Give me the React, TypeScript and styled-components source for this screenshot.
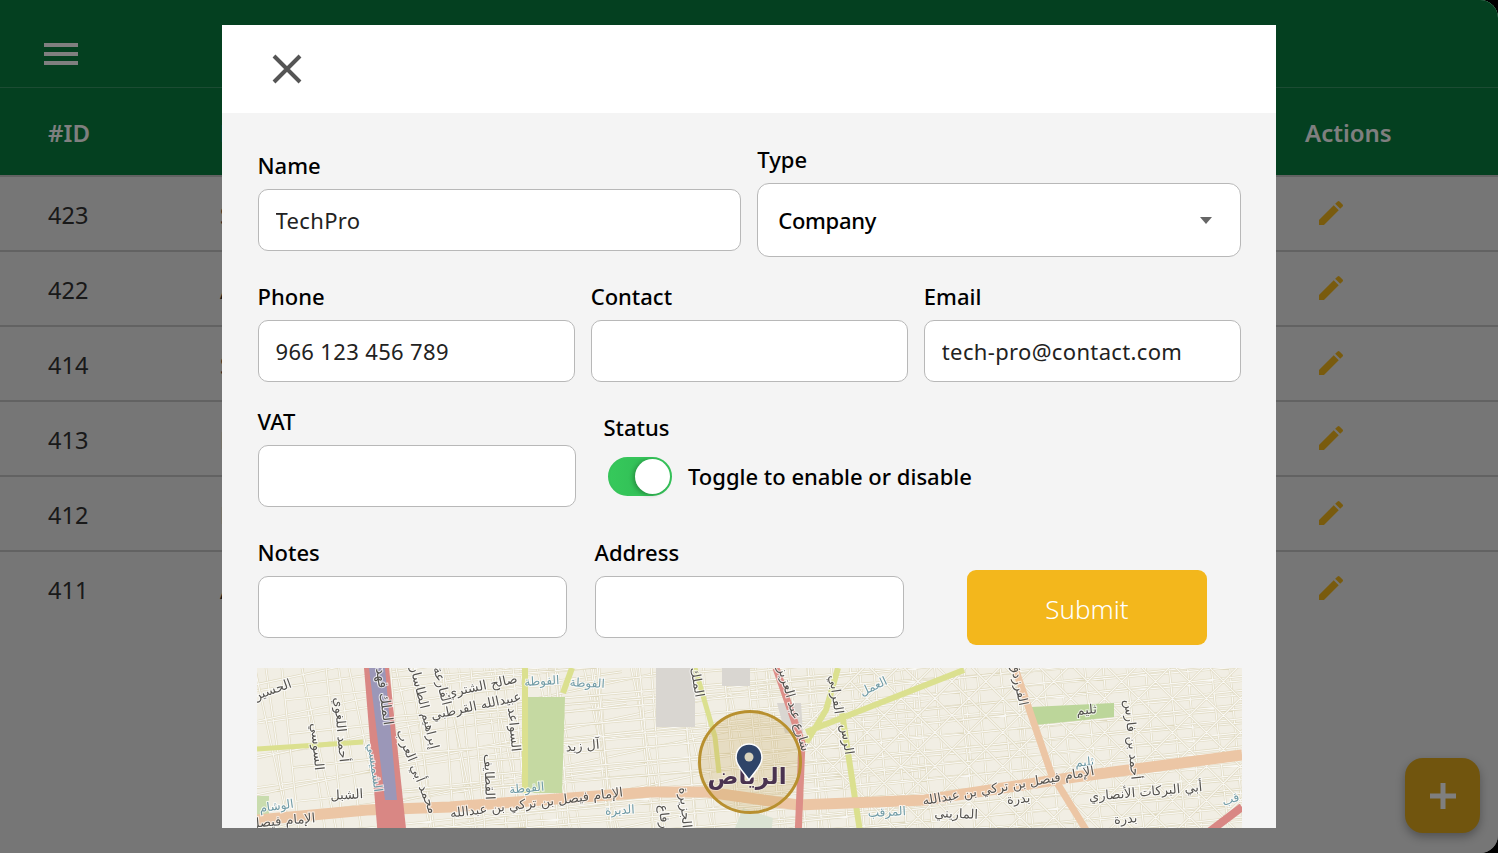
import React from 'react';
import styled, { createGlobalStyle } from 'styled-components';
import { MdEdit } from 'react-icons/md';

const GlobalStyle = createGlobalStyle`
  html, body {
    margin: 0;
    height: 100%;
    background: #000;
    overflow: hidden;
  }
  body {
    font-family: "Noto Sans", "Open Sans", "Liberation Sans", sans-serif;
  }
`;

const Page = styled.div`
  width: 1498px;
  height: 853px;
  background: #ececec;
  border-radius: 0 18px 18px 0;
  overflow: hidden;
  position: relative;
`;

const TopBar = styled.header`
  height: 87px;
  background: #088040;
  border-bottom: 1px solid rgba(255, 255, 255, 0.2);
  display: flex;
  align-items: center;
  padding: 0 44px;
`;

const Burger = styled.div`
  width: 34px;
  display: flex;
  flex-direction: column;
  gap: 5px;
  margin-top: 20px;
  span {
    height: 4px;
    background: #fff;
  }
`;

const Row = styled.div<{ $head?: boolean; $last?: boolean }>`
  box-sizing: border-box;
  display: grid;
  grid-template-columns: 172px 1fr 193px;
  align-items: center;
  padding: 2px 0 0 48px;
  height: ${(p) => (p.$head ? '89px' : '75px')};
  background: ${(p) => (p.$head ? '#088040' : '#ececec')};
  color: ${(p) => (p.$head ? '#fff' : '#333')};
  font-size: ${(p) => (p.$head ? '24px' : '23.5px')};
  font-weight: ${(p) => (p.$head ? 600 : 400)};
  border-bottom: 2px solid ${(p) => (p.$last ? 'transparent' : '#c4c4c4')};
`;

const EditIcon = styled(MdEdit)`
  color: #f3b71c;
  margin-left: 10px;
  display: block;
  margin-top: -3px;
`;

const Fab = styled.button`
  position: absolute;
  right: 18px;
  bottom: 20px;
  width: 75px;
  height: 75px;
  border: none;
  border-radius: 18px;
  background: #e2aa1c;
  box-shadow: 0 4px 10px rgba(0, 0, 0, 0.3);
  display: flex;
  align-items: center;
  justify-content: center;
  padding: 0;
`;

const Overlay = styled.div`
  position: absolute;
  inset: 0;
  background: rgba(0, 0, 0, 0.5);
  display: flex;
  align-items: center;
  justify-content: center;
`;

const Modal = styled.div`
  width: 1054px;
  height: 803px;
  background: #f4f4f4;
  overflow: hidden;
`;

const ModalHead = styled.div`
  height: 88px;
  background: #fff;
  display: flex;
  align-items: center;
  padding-left: 50px;
`;

const ModalBody = styled.form`
  padding: 31px 35px 0 35.5px;
  display: flex;
  flex-direction: column;
`;

const FormRow = styled.div<{ $cols: string; $gap?: number; $top: number }>`
  display: grid;
  grid-template-columns: ${(p) => p.$cols};
  column-gap: ${(p) => p.$gap ?? 16}px;
  align-items: center;
  margin-top: ${(p) => p.$top}px;
`;

const Field = styled.div<{ $top?: boolean }>`
  display: flex;
  flex-direction: column;
  min-width: 0;
  align-self: ${(p) => (p.$top ? 'start' : 'auto')};
`;

const Label = styled.label`
  height: 30px;
  line-height: 30px;
  margin-bottom: 9px;
  font-size: 22px;
  font-weight: 500;
  color: #000;
`;

const TextInput = styled.input`
  box-sizing: border-box;
  width: 100%;
  height: 62px;
  padding: 0 17px;
  background: #fff;
  border: 1px solid #b8b8b8;
  border-radius: 10px;
  font: 400 22px "Noto Sans", "Open Sans", sans-serif;
  letter-spacing: 0.35px;
  color: #222;
  outline: none;
`;

const SelectBox = styled.div`
  box-sizing: border-box;
  height: 74px;
  padding: 0 28px 0 20px;
  background: #fff;
  border: 1px solid #b8b8b8;
  border-radius: 12px;
  display: flex;
  align-items: center;
  justify-content: space-between;
  font-size: 22px;
  font-weight: 500;
  letter-spacing: -0.3px;
  color: #000;
  &::after {
    content: '';
    border-left: 6.5px solid transparent;
    border-right: 6.5px solid transparent;
    border-top: 7px solid #666;
  }
`;

const StatusField = styled.div`
  display: flex;
  flex-direction: column;
  margin-bottom: 4px;
`;

const StatusLine = styled.div`
  display: flex;
  align-items: center;
  gap: 16px;
  margin: 4px 0 1px 4.5px;
  font-size: 22px;
  font-weight: 500;
  color: #000;
`;

const Toggle = styled.span`
  box-sizing: border-box;
  width: 64px;
  height: 39px;
  margin-top: 2px;
  border-radius: 20px;
  background: linear-gradient(90deg, #36c95b, #2fb653);
  border: 2px solid #36c45a;
  display: flex;
  justify-content: flex-end;
  align-items: center;
  &::after {
    content: '';
    width: 35px;
    height: 35px;
    border-radius: 50%;
    background: #fff;
    box-shadow: -2px 1px 4px rgba(0, 0, 0, 0.25);
  }
`;

const SubmitButton = styled.button`
  width: 240px;
  height: 75px;
  align-self: start;
  margin: 33px 0 0 35.5px;
  padding: 2px 0 0;
  background: #f3b71c;
  border: none;
  border-radius: 9px;
  color: #fff;
  font: 300 26px "Noto Sans", "Open Sans", sans-serif;
`;

const MapFrame = styled.div`
  margin: 23px 0 0 -0.5px;
  width: 985px;
  height: 200px;
  background: #f1eee4;
  overflow: hidden;
  svg {
    display: block;
    filter: blur(0.4px);
  }
`;

const records = [
  { id: 423, name: 'Saudi Tech' },
  { id: 422, name: 'Al Noor' },
  { id: 414, name: 'Smart Co' },
  { id: 413, name: 'Hala Co' },
  { id: 412, name: 'Hala Co' },
  { id: 411, name: 'Al Jazira' },
];

// street blocks: x, y, w, h, spacing x, spacing y, rotation
const blocks = [
  [0, 0, 105, 160, 36, 32, -8],
  [132, 0, 138, 160, 46, 36, -12],
  [310, 0, 90, 160, 44, 34, -6],
  [400, 0, 120, 160, 52, 38, -4],
  [545, 0, 215, 160, 42, 14, -5],
  [760, 0, 120, 160, 42, 14, -6],
  [880, 0, 105, 140, 24, 24, 45],
];

const StreetBlock = ({ spec }: { spec: number[] }) => {
  const [x, y, w, h, dx, dy, rot] = spec;
  const size = Math.max(w, h) * 2;
  const lines = [];
  for (let i = -size; i < size; i += dx) {
    lines.push(`M${i} ${-size}V${size}`);
  }
  for (let j = -size; j < size; j += dy) {
    lines.push(`M${-size} ${j}H${size}`);
  }
  const d = lines.join('');
  return (
    <svg x={x} y={y} width={w} height={h}>
      <g transform={`translate(${w / 2} ${h / 2}) rotate(${rot})`}>
        <path d={d} stroke="#dfd9c0" strokeWidth="2.4" fill="none" />
        <path d={d} stroke="#f9f8f4" strokeWidth="1.2" fill="none" />
      </g>
    </svg>
  );
};

// label text, x, y, rotation, size, teal flags the district names
const labels: [string, number, number, number, number?, boolean?][] = [
  ['صالح الشتري', 226, 22, -12],
  ['عبيدالله القرطبي', 220, 42, -12],
  ['الفوطة', 285, 17, -3, 12, true],
  ['الفوطة', 330, 19, 3, 12, true],
  ['الملك فهد', 123, 29, 82, 14],
  ['الحسين', 16, 26, -20],
  ['السوسي', 56, 79, 85],
  ['أحمد اللغوي', 80, 62, 85],
  ['الشميسي', 114, 100, 82, 12, true],
  ['إبراهيم الطاسان', 163, 39, 76],
  ['الفارعة', 181, 19, 76],
  ['محمد أبي العرب', 156, 105, 68],
  ['السواعد', 253, 62, 85],
  ['آل زيد', 326, 82, -5],
  ['القطايف', 228, 109, 88],
  ['الفوطة', 270, 124, -5, 12, true],
  ['الإمام فيصل بن تركي بن عبدالله', 280, 139, -7],
  ['الديرة', 363, 146, -3, 12, true],
  ['الشبل', 90, 131, -3],
  ['الوشام', 20, 142, -8, 12, true],
  ['الإمام فيصل', 26, 157, -5],
  ['شارع عبد العزيز', 533, 42, 74],
  ['العمل', 618, 22, -25, 12, true],
  ['الفرزدق', 758, 17, 78],
  ['الفرابي', 575, 27, 82],
  ['الرس', 586, 72, 82],
  ['ثليم', 830, 46, -5],
  ['ثليم', 828, 98, -5, 12, true],
  ['أحمد بن فارس', 871, 72, 85],
  ['الإمام فيصل بن تركي بن عبدالله', 752, 122, -10],
  ['أبي البركات الأنصاري', 889, 128, -5],
  ['بدرة', 762, 135, -5],
  ['بدرة', 869, 155, -5],
  ['المرقب', 630, 148, -3, 12, true],
  ['الماريني', 699, 150, 2],
  ['الملك', 436, 15, 80],
  ['الجزيرة', 424, 140, 85],
  ['رفاع', 403, 149, 85],
  ['قب', 975, 135, -20, 12, true],
];

const MapLabel = styled.text<{ $size: number; $teal?: boolean }>`
  font-family: "DejaVu Sans", "Noto Sans", sans-serif;
  font-size: ${(p) => p.$size}px;
  fill: ${(p) => (p.$teal ? '#6f9aa5' : '#55534f')};
  text-anchor: middle;
  paint-order: stroke;
  stroke: rgba(255, 255, 255, 0.75);
  stroke-width: 2px;
`;

const MapCity = styled.text`
  font-family: "DejaVu Sans", "Noto Sans", sans-serif;
  font-size: 23px;
  font-weight: 700;
  fill: #4a3350;
  text-anchor: middle;
  paint-order: stroke;
  stroke: rgba(255, 255, 255, 0.4);
  stroke-width: 2px;
`;

const CityMap = () => (
  <svg width="985" height="200" viewBox="0 0 985 200">
    {blocks.map((spec) => (
      <StreetBlock key={spec[0]} spec={spec} />
    ))}
    <path d="M399 0h39v59h-39zM465 0h28v18h-28zM520 35h24l2 30h-18z" fill="#d9d6d1" />
    <path d="M0 128h12v20H0z" fill="#c9dcae" />
    <path d="M271 29h37l-3 96h-35z" fill="#c5d9a2" />
    <path d="M774 39l83-4v14l-79 8z" fill="#bcd69a" />
    <path d="M466 190l20-50 30 10-6 50z" fill="#dbe3d3" />
    <path d="M268 0v125M315 0l-9 25" stroke="#dbe08f" strokeWidth="6" fill="none" />
    <path d="M0 81L106 74" stroke="#dbe08f" strokeWidth="5" fill="none" />
    <path d="M438 0L458 69L462 105" stroke="#dbe08f" strokeWidth="5" fill="none" />
    <path d="M549 64L707 2M585 45L604 170M581 0L569 42L549 75" stroke="#dbe08f" strokeWidth="6" fill="none" />
    <path d="M0 152L110 142L193 139L393 124L450 124L541 137L668 132L818 109L985 87" stroke="#ecc6a5" strokeWidth="11" fill="none" />
    <path d="M758 0L794 105L834 170" stroke="#ecc6a5" strokeWidth="7" fill="none" />
    <path d="M107 0h25l18 170h-29z" fill="#d98784" />
    <path d="M112 0h16l12 132h-12z" fill="#9b97b8" />
    <path d="M519 0L545 75L541 170" stroke="#dd8e88" strokeWidth="7" fill="none" />
    <path d="M944 170L985 139" stroke="#d98784" strokeWidth="8" fill="none" />
    {labels.map(([text, x, y, rot, size, teal]) => (
      <MapLabel
        key={`${text}${x}`}
        x={x}
        y={y}
        $size={size ?? 13}
        $teal={teal}
        transform={`rotate(${rot} ${x} ${y})`}
      >
        {text}
      </MapLabel>
    ))}
    <circle cx="493" cy="94" r="50.5" fill="rgba(190,150,60,0.2)" stroke="#b8902f" strokeWidth="3" />
    <MapCity x="490" y="116">
      الرياض
    </MapCity>
    <path
      d="M492 76c-8 0-13 6-13 14 0 8 8 14 13 22 5-8 13-14 13-22 0-8-5-14-13-14z"
      fill="#2f4468"
      stroke="#fff"
      strokeWidth="1.5"
    />
    <circle cx="492" cy="89" r="4.5" fill="#d9d3bd" />
  </svg>
);

const App = () => (
  <Page>
    <GlobalStyle />
    <TopBar>
      <Burger>
        <span />
        <span />
        <span />
      </Burger>
    </TopBar>
    <Row $head>
      <span>#ID</span>
      <span>Name</span>
      <span>Actions</span>
    </Row>
    {records.map((r, i) => (
      <Row key={r.id} $last={i === records.length - 1}>
        <span>{r.id}</span>
        <span>{r.name}</span>
        <span>
          <EditIcon size={32} />
        </span>
      </Row>
    ))}
    <Fab aria-label="Add">
      <svg width="26" height="26" viewBox="0 0 26 26">
        <path d="M13 0v26M0 13h26" stroke="#fff" strokeWidth="5" />
      </svg>
    </Fab>
    <Overlay>
      <Modal>
        <ModalHead>
          <svg width="30" height="30" viewBox="0 0 30 30">
            <path d="M2 2l26 26M28 2L2 28" stroke="#555" strokeWidth="4" />
          </svg>
        </ModalHead>
        <ModalBody>
          <FormRow $cols="1fr 1fr" $top={0}>
            <Field>
              <Label>Name</Label>
              <TextInput readOnly value="TechPro" />
            </Field>
            <Field>
              <Label>Type</Label>
              <SelectBox>Company</SelectBox>
            </Field>
          </FormRow>
          <FormRow $cols="1fr 1fr 1fr" $top={24}>
            <Field>
              <Label>Phone</Label>
              <TextInput readOnly value="966 123 456 789" />
            </Field>
            <Field>
              <Label>Contact</Label>
              <TextInput readOnly value="" />
            </Field>
            <Field>
              <Label>Email</Label>
              <TextInput readOnly value="tech-pro@contact.com" />
            </Field>
          </FormRow>
          <FormRow $cols="318px 1fr" $gap={28} $top={24}>
            <Field>
              <Label>VAT</Label>
              <TextInput readOnly value="" />
            </Field>
            <StatusField>
              <Label>Status</Label>
              <StatusLine>
                <Toggle role="switch" aria-checked="true" />
                Toggle to enable or disable
              </StatusLine>
            </StatusField>
          </FormRow>
          <FormRow $cols="309px 309px 275.5px" $gap={28} $top={30}>
            <Field $top>
              <Label>Notes</Label>
              <TextInput readOnly value="" />
            </Field>
            <Field $top>
              <Label>Address</Label>
              <TextInput readOnly value="" />
            </Field>
            <SubmitButton type="button">Submit</SubmitButton>
          </FormRow>
          <MapFrame>
            <CityMap />
          </MapFrame>
        </ModalBody>
      </Modal>
    </Overlay>
  </Page>
);

export default App;
